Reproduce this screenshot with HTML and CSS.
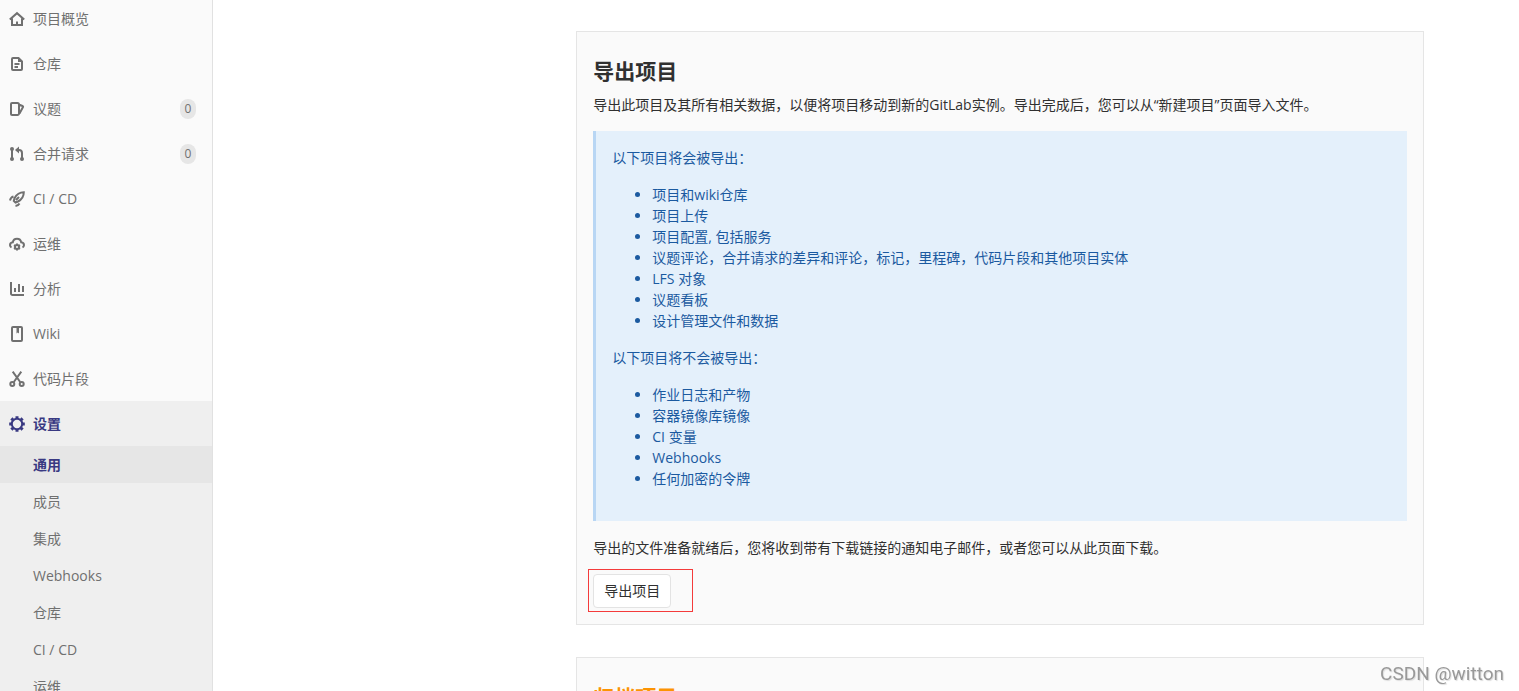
FILE: index.html
```html
<!DOCTYPE html>
<html lang="zh-CN">
<head>
<meta charset="utf-8">
<meta name="viewport" content="width=device-width, initial-scale=1">
<title>设置 · 通用</title>
<link rel="stylesheet" href="styles.css">
</head>
<body>
<div class="layout">
  <nav class="sidebar" aria-label="项目导航">
    <ul class="nav-list">
      <li><a class="nav-link" href="#overview">
        <svg class="icon" viewBox="0 0 16 16" aria-hidden="true"><path d="M.8 8.500 8 2.200l7.200 6.300M3 7.500V14h10V7.500"/><path class="solid" d="M7 10.500h2V14H7z"/></svg>
        <span class="nav-name">项目概览</span></a></li>
      <li><a class="nav-link" href="#repo">
        <svg class="icon" viewBox="0 0 16 16" aria-hidden="true"><path d="M4 2H9.500L13 5.500V13a1 1 0 0 1-1 1H4a1 1 0 0 1-1-1V3a1 1 0 0 1 1-1ZM5.500 8h5M5.500 11h3.500"/><path class="solid" d="M9 2v4h4z"/></svg>
        <span class="nav-name">仓库</span></a></li>
      <li><a class="nav-link" href="#issues">
        <svg class="icon" viewBox="0 0 16 16" aria-hidden="true"><path d="M3 2h5.500A1.500 1.500 0 0 1 10 3.500v9A1.500 1.500 0 0 1 8.500 14H3a1 1 0 0 1-1-1V3a1 1 0 0 1 1-1ZM10.500 3.800l3 1.200c.5.200.7.600.5 1.100L10.500 12.500"/></svg>
        <span class="nav-name">议题</span><span class="badge">0</span></a></li>
      <li><a class="nav-link" href="#merge-requests">
        <svg class="icon" viewBox="0 0 16 16" aria-hidden="true"><path d="M3 3v10M13 13V7a3 3 0 0 0-3-3H9"/><circle class="solid" cx="3" cy="3" r="2"/><circle class="solid" cx="3" cy="13" r="2"/><circle class="solid" cx="13" cy="13" r="2"/><path class="solid" d="M10 .5v7L6 4z"/></svg>
        <span class="nav-name">合并请求</span><span class="badge">0</span></a></li>
      <li><a class="nav-link" href="#pipelines">
        <svg class="icon" viewBox="0 0 16 16" aria-hidden="true"><path d="M14.800 1.200c-3.800 0-7.300 2.300-9.300 6L4.800 10 6.500 11.500 9 10.500c3.700-2 5.800-5.500 5.800-9.300ZM7 9l3-3M4.500 5.500C2.500 6 1.500 7 1 9.500M10.500 12.500c-.8 1.500-2 2.200-4 2.500"/></svg>
        <span class="nav-name">CI / CD</span></a></li>
      <li><a class="nav-link" href="#operations">
        <svg class="icon" viewBox="0 0 16 16" aria-hidden="true"><path d="M2.500 11.500A3 3 0 0 1 1 9.200C1 7.600 2.200 6.500 3.800 6.300 4.200 4 5.800 2.800 8 2.800s3.800 1.200 4.200 3.500C13.800 6.500 15 7.600 15 9.200a3 3 0 0 1-1.500 2.300"/><circle cx="8" cy="11" r="2"/><path d="M8 7.500v1.300M8 13.200v1.300M5 9.200l1.100.7M9.900 12.100l1.100.7M5 12.800l1.100-.7M9.900 9.900l1.100-.7"/></svg>
        <span class="nav-name">运维</span></a></li>
      <li><a class="nav-link" href="#analytics">
        <svg class="icon" viewBox="0 0 16 16" aria-hidden="true"><path d="M2 1v11.500A1.500 1.500 0 0 0 3.500 14H15M6 7v4M10 3v8M14 5v6"/></svg>
        <span class="nav-name">分析</span></a></li>
      <li><a class="nav-link" href="#wiki">
        <svg class="icon" viewBox="0 0 16 16" aria-hidden="true"><path d="M4 1h8a1 1 0 0 1 1 1v12a1 1 0 0 1-1 1H4a1 1 0 0 1-1-1V2a1 1 0 0 1 1-1Z"/><path class="solid" d="M7.500 1H10v6.500l-1.250-1L7.500 7.500z"/></svg>
        <span class="nav-name">Wiki</span></a></li>
      <li><a class="nav-link" href="#snippets">
        <svg class="icon" viewBox="0 0 16 16" aria-hidden="true"><path d="M3.700.7 11.200 11M12.300.7 4.800 11"/><circle cx="3.300" cy="13" r="2"/><circle cx="12.700" cy="13" r="2"/></svg>
        <span class="nav-name">代码片段</span></a></li>
      <li class="nav-open"><a class="nav-link nav-active" href="#settings">
        <svg class="icon" viewBox="0 0 16 16" aria-hidden="true"><circle cx="8" cy="8" r="5.200"/><path class="cog" d="M8 .2v2.300M8 13.500v2.300M.2 8h2.300M13.500 8h2.300M2.400 2.400 4 4M12 12l1.600 1.600M2.400 13.600 4 12M12 4l1.600-1.600"/></svg>
        <span class="nav-name">设置</span></a>
        <ul class="sub-list">
          <li><a class="sub-link sub-active" href="#general" aria-current="page">通用</a></li>
          <li><a class="sub-link" href="#members">成员</a></li>
          <li><a class="sub-link" href="#integrations">集成</a></li>
          <li><a class="sub-link" href="#webhooks">Webhooks</a></li>
          <li><a class="sub-link" href="#repository">仓库</a></li>
          <li><a class="sub-link" href="#ci-cd">CI / CD</a></li>
          <li><a class="sub-link" href="#ops">运维</a></li>
        </ul>
      </li>
    </ul>
  </nav>
  <main class="content">
    <div class="settings">
      <section class="card">
        <h4 class="card-title">导出项目</h4>
        <p class="text">导出此项目及其所有相关数据，以便将项目移动到新的GitLab实例。导出完成后，您可以从“新建项目”页面导入文件。</p>
        <div class="callout">
          <p class="text">以下项目将会被导出：</p>
          <ul class="items">
            <li>项目和wiki仓库</li>
            <li>项目上传</li>
            <li>项目配置, 包括服务</li>
            <li>议题评论，合并请求的差异和评论，标记，里程碑，代码片段和其他项目实体</li>
            <li>LFS 对象</li>
            <li>议题看板</li>
            <li>设计管理文件和数据</li>
          </ul>
          <p class="text">以下项目将不会被导出：</p>
          <ul class="items">
            <li>作业日志和产物</li>
            <li>容器镜像库镜像</li>
            <li>CI 变量</li>
            <li>Webhooks</li>
            <li>任何加密的令牌</li>
          </ul>
        </div>
        <p class="text">导出的文件准备就绪后，您将收到带有下载链接的通知电子邮件，或者您可以从此页面下载。</p>
        <div class="action">
          <button class="button" type="button">导出项目</button>
          <span class="highlight"></span>
        </div>
      </section>
      <section class="card">
        <h4 class="card-title card-title-warning">归档项目</h4>
      </section>
    </div>
  </main>
</div>
<div class="watermark">CSDN @witton</div>
</body>
</html>
```
FILE: styles.css
```css
* { box-sizing: border-box; }

body {
  margin: 0;
  height: 100vh;
  overflow: hidden;
  background: #fff;
  color: #303030;
  font: 14px/21px "Open Sans", "Noto Sans CJK SC", sans-serif;
}

ul, p, h4 { margin: 0; padding: 0; }

.layout { display: flex; height: 100%; }

.sidebar {
  flex: 0 0 213px;
  overflow: hidden;
  background: #fafafa;
  border-right: 1px solid #e1e1e1;
}

.nav-list, .sub-list { list-style: none; }
.nav-list { margin-top: -4px; }

.nav-link {
  display: flex;
  align-items: center;
  gap: 8px;
  height: 45px;
  padding: 0 16px 0 9px;
  color: #707070;
  text-decoration: none;
}

.nav-name { flex: 1; }

.icon {
  width: 16px;
  height: 16px;
  fill: none;
  stroke: currentColor;
  stroke-width: 2;
}
.icon .solid { fill: currentColor; stroke: none; }
.icon .cog { stroke-width: 3; }

.badge {
  width: 16px;
  height: 20px;
  border-radius: 8px;
  background: #e6e6e6;
  font-size: 12px;
  line-height: 20px;
  text-align: center;
}

.nav-open { background: #efefef; }
.nav-active { color: #393982; font-weight: 600; }

.sub-link {
  display: block;
  padding: 8px 16px 8px 33px;
  color: #707070;
  text-decoration: none;
}
.sub-active { background: #e6e6e6; color: #393982; font-weight: 600; }

.content {
  flex: 1;
  min-width: 0;
  padding: 31px 95px 0 0;
}

.settings { margin-left: 30%; }

.card {
  margin-bottom: 32px;
  padding: 16px;
  border: 1px solid #e5e5e5;
  background: #fafafa;
}

.card-title {
  margin: 9px 0;
  font-size: 21px;
  line-height: 28px;
  font-weight: 700;
}
.card-title-warning { color: #fc9403; }

.text { margin-bottom: 16px; }

.callout {
  margin-bottom: 16px;
  padding: 16px;
  border-left: 3px solid #b8d6f4;
  background: #e4f0fb;
  color: #1b5aa0;
}

.items { margin-bottom: 16px; padding-left: 40px; }

.action { position: relative; }

.button {
  display: block;
  height: 34px;
  padding: 0 10px 2px;
  border: 1px solid #e3e3e3;
  border-radius: 4px;
  background: #fff;
  color: #303030;
  font: inherit;
}

.highlight {
  position: absolute;
  top: -5px;
  left: -5px;
  width: 105px;
  height: 43px;
  border: 1px solid #f43b3b;
  pointer-events: none;
}

.watermark {
  position: fixed;
  right: 15px;
  bottom: 5px;
  color: #999;
  font: 19px/24px Roboto, sans-serif;
  text-shadow: 1px 1px 1px #ddd;
}
```
